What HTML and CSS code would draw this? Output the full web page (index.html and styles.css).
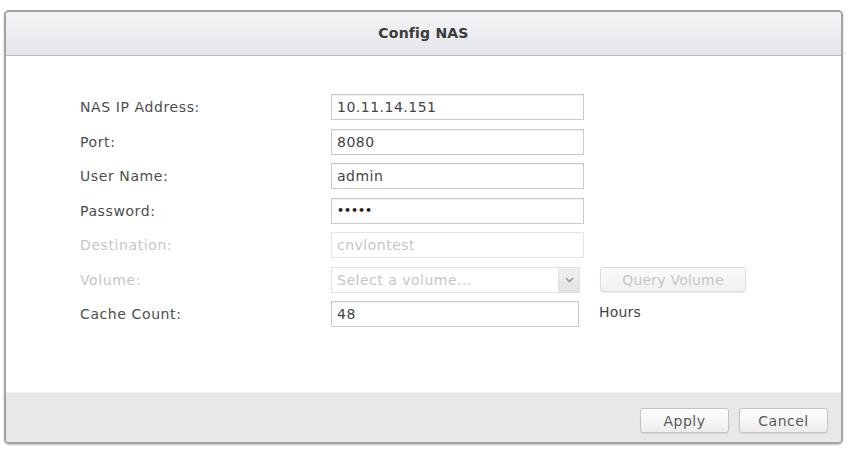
FILE: index.html
```html
<!DOCTYPE html>
<html>
<head>
<meta charset="utf-8">
<link rel="stylesheet" href="styles.css">
</head>
<body>
<div class="dialog">
  <div class="titlebar">Config NAS</div>
  <div class="content">
    <div class="form">
      <div class="row"><span class="label">NAS IP Address:</span><span class="field">10.11.14.151</span></div>
      <div class="row"><span class="label">Port:</span><span class="field">8080</span></div>
      <div class="row"><span class="label">User Name:</span><span class="field">admin</span></div>
      <div class="row"><span class="label">Password:</span><span class="field pw">•••••</span></div>
      <div class="row disabled"><span class="label">Destination:</span><span class="field">cnvlontest</span></div>
      <div class="row disabled"><span class="label">Volume:</span>
        <span class="combo"><span class="combo-text">Select a volume...</span><span class="trigger"><svg width="9" height="6" viewBox="0 0 9 6"><path d="M1 1 L4.5 4.5 L8 1" fill="none" stroke="#9a9a9a" stroke-width="1.6"/></svg></span></span>
        <span class="btn btn-disabled query">Query Volume</span>
      </div>
      <div class="row"><span class="label">Cache Count:</span><span class="field short">48</span><span class="unit">Hours</span></div>
    </div>
  </div>
  <div class="footer">
    <span class="btn">Apply</span>
    <span class="btn">Cancel</span>
  </div>
</div>
</body>
</html>
```
FILE: styles.css
```css
html, body {
  margin: 0;
  padding: 0;
  background: #ffffff;
}
body {
  font-family: "DejaVu Sans", Tahoma, sans-serif;
  font-size: 14px;
  letter-spacing: 0.6px;
  color: #4a4a4a;
  padding: 10px 5px 7px 4px;
}
.dialog {
  width: 835px;
  height: 430px;
  border: 2px solid #a3a3a3;
  border-radius: 5px;
  box-shadow: 0 1px 2px rgba(0,0,0,0.25);
  display: flex;
  flex-direction: column;
  overflow: hidden;
  background: #fff;
}
.titlebar {
  height: 44px;
  flex: none;
  border-bottom: 1px solid #b9bbbf;
  background: linear-gradient(#f4f5f7, #e3e5e9);
  display: flex;
  align-items: center;
  justify-content: center;
  font-weight: bold;
  font-size: 14px;
  letter-spacing: 0.2px;
  color: #3a3a3a;
  padding-bottom: 2px;
  box-sizing: border-box;
}
.content {
  flex: 1;
  background: #fff;
  padding: 38px 0 0 74px;
}
.form {
  display: flex;
  flex-direction: column;
  gap: 8.5px;
}
.row {
  display: flex;
  align-items: center;
  height: 26px;
}
.label {
  width: 251px;
  flex: none;
  color: #4e4e4e;
}
.field {
  box-sizing: border-box;
  width: 253px;
  height: 26px;
  border: 1px solid #cacaca;
  box-shadow: inset 0 1px 1px rgba(0,0,0,0.06);
  display: flex;
  align-items: center;
  padding-left: 5px;
  color: #444;
  background: #fff;
  letter-spacing: 0.5px;
}
.field.short {
  width: 248px;
}
.field.pw {
  font-size: 11px;
  font-weight: bold;
  letter-spacing: 0;
  color: #222;
}
.disabled .label,
.disabled .field {
  color: #c6c6c6;
}
.disabled .field {
  border-color: #e6e6e6;
  box-shadow: none;
}
.combo {
  box-sizing: border-box;
  width: 249px;
  height: 26px;
  border: 1px solid #e2e2e2;
  display: flex;
  align-items: stretch;
}
.combo-text {
  flex: 1;
  padding-left: 5px;
  display: flex;
  align-items: center;
  color: #c6c6c6;
  letter-spacing: 0.5px;
}
.trigger {
  width: 20px;
  background: linear-gradient(#f0f0f0, #e2e2e2);
  border-left: 1px solid #e0e0e0;
  display: flex;
  align-items: center;
  justify-content: center;
}
.btn {
  box-sizing: border-box;
  height: 25px;
  width: 88px;
  border: 1px solid #c4c4c4;
  border-radius: 3px;
  background: linear-gradient(#ffffff, #ececec);
  display: inline-flex;
  align-items: center;
  justify-content: center;
  color: #5a5a5a;
  box-shadow: 0 1px 1px rgba(0,0,0,0.08);
  letter-spacing: 0.5px;
}
.btn-disabled {
  color: #c6c6c6;
  border-color: #dcdcdc;
  background: linear-gradient(#fbfbfb, #f0f0f0);
}
.query {
  width: 146px;
  margin-left: 20px;
  letter-spacing: 0.2px;
}
.unit {
  margin-left: 20px;
  color: #444;
  margin-top: -5px;
  letter-spacing: 0.2px;
}
.footer {
  flex: none;
  height: 50px;
  box-sizing: border-box;
  background: #e8e8e8;
  border-top: 1px solid #f1f1f1;
  display: flex;
  justify-content: flex-end;
  align-items: flex-start;
  gap: 10px;
  padding: 15px 13px 0 0;
}
.footer .btn {
  width: 89px;
}
```
